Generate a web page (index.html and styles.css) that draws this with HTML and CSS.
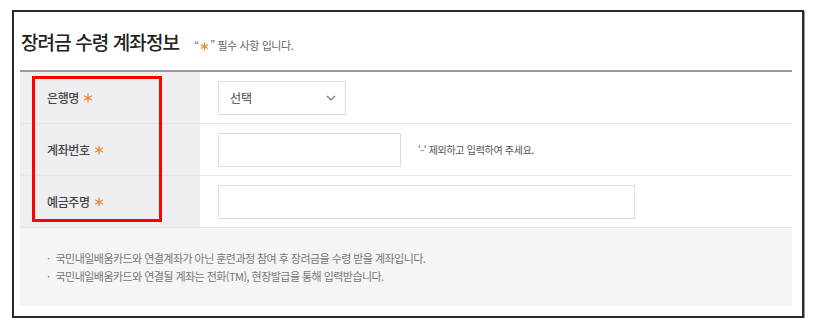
FILE: index.html
```html
<!DOCTYPE html>
<html lang="ko">
<head>
    <meta charset="UTF-8">
    <meta name="viewport" content="width=device-width, initial-scale=1.0">
    <title>장려금 수령 계좌정보</title>
    <link rel="stylesheet" href="styles.css">
</head>
<body>
    <div class="frame">
        <div class="head">
            <h2 class="title">장려금 수령 계좌정보</h2>
            <span class="note">“<svg class="star small" viewBox="0 0 10 10"><path d="M5 0.5V9.5M1.1 2.75L8.9 7.25M1.1 7.25L8.9 2.75"/></svg>” 필수 사항 입니다.</span>
        </div>

        <div class="form">
            <div class="row">
                <div class="label">은행명 <svg class="star" viewBox="0 0 10 10"><path d="M5 0.5V9.5M1.1 2.75L8.9 7.25M1.1 7.25L8.9 2.75"/></svg></div>
                <div class="value">
                    <div class="select">
                        <span>선택</span>
                        <svg class="chev" viewBox="0 0 10 6"><path d="M1 1L5 5L9 1"/></svg>
                    </div>
                </div>
            </div>
            <div class="row">
                <div class="label">계좌번호 <svg class="star" viewBox="0 0 10 10"><path d="M5 0.5V9.5M1.1 2.75L8.9 7.25M1.1 7.25L8.9 2.75"/></svg></div>
                <div class="value">
                    <div class="input short"></div>
                    <span class="hint">'-' 제외하고 입력하여 주세요.</span>
                </div>
            </div>
            <div class="row">
                <div class="label">예금주명 <svg class="star" viewBox="0 0 10 10"><path d="M5 0.5V9.5M1.1 2.75L8.9 7.25M1.1 7.25L8.9 2.75"/></svg></div>
                <div class="value">
                    <div class="input long"></div>
                </div>
            </div>
        </div>

        <ul class="notice">
            <li>국민내일배움카드와 연결계좌가 아닌 훈련과정 참여 후 장려금을 수령 받을 계좌입니다.</li>
            <li>국민내일배움카드와 연결될 계좌는 전화(TM), 현장발급을 통해 입력받습니다.</li>
        </ul>

        <div class="mark"></div>
    </div>
</body>
</html>
```

FILE: styles.css
```css
body {
    margin: 0;
    background: #fff;
    font-family: "Noto Sans CJK KR", "Noto Sans", sans-serif;
    color: #333;
}

.frame {
    position: relative;
    box-sizing: border-box;
    width: 792px;
    height: 308px;
    margin: 10px 0 0 12px;
    padding: 0 10px 0 6px;
    border: 2px solid #2b2b2b;
    box-shadow: 1px 1px 0 #999;
}

.head {
    display: flex;
    align-items: baseline;
    height: 58px;
    box-sizing: border-box;
    padding: 16px 0 0 1px;
}

.title {
    margin: 0;
    font-size: 19px;
    font-weight: 500;
    color: #222;
    letter-spacing: -0.9px;
}

.note {
    margin-left: 15px;
    font-size: 11px;
    color: #666;
    letter-spacing: -0.4px;
}

.form {
    border-top: 2px solid #9a9a9a;
}

.row {
    display: flex;
    height: 52px;
    box-sizing: border-box;
    border-bottom: 1px solid #e6e6e6;
}

.label {
    display: flex;
    align-items: center;
    width: 180px;
    box-sizing: border-box;
    padding-left: 27px;
    background: #efeff2;
    font-size: 12px;
    font-weight: 500;
    color: #444;
    letter-spacing: -0.4px;
}

.star {
    width: 10px;
    height: 10px;
    margin-left: 4px;
    fill: none;
    stroke: #e8842e;
    stroke-width: 1.2;
}

.star.small {
    width: 9px;
    height: 9px;
    margin: 0 1px;
    vertical-align: -1px;
}

.value {
    display: flex;
    align-items: center;
    padding-left: 18px;
}

.select {
    display: flex;
    align-items: center;
    justify-content: space-between;
    width: 128px;
    height: 34px;
    box-sizing: border-box;
    padding: 0 9px 0 11px;
    border: 1px solid #dcdcdc;
    font-size: 12px;
    color: #444;
}

.chev {
    width: 10px;
    height: 6px;
    fill: none;
    stroke: #777;
    stroke-width: 1.2;
}

.input {
    height: 34px;
    box-sizing: border-box;
    border: 1px solid #dcdcdc;
}

.input.short {
    width: 183px;
}

.input.long {
    width: 417px;
}

.hint {
    margin-left: 17px;
    font-size: 10px;
    color: #555;
    letter-spacing: -0.3px;
}

.notice {
    margin: 0;
    height: 78px;
    box-sizing: border-box;
    padding: 21px 0 0 27px;
    list-style: none;
    background: #f5f5f5;
    font-size: 11px;
    line-height: 18px;
    color: #777;
    letter-spacing: -0.55px;
}

.notice li::before {
    content: "·";
    margin-right: 6px;
}

.mark {
    position: absolute;
    left: 18px;
    top: 64px;
    width: 130px;
    height: 146px;
    box-sizing: border-box;
    border: 3px solid #f00;
}
```
